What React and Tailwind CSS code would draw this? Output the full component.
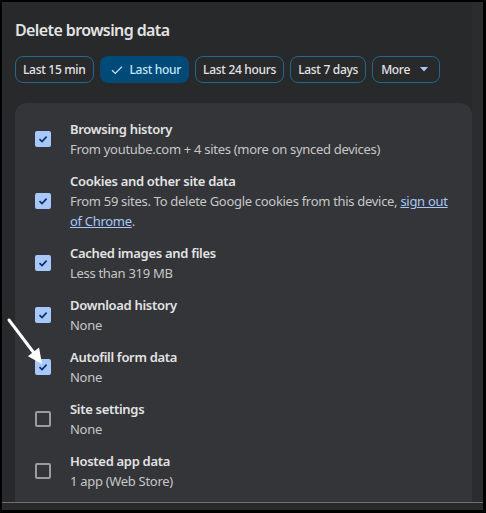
import React from "react";

const rows = [
  { title: "Browsing history", sub: "From youtube.com + 4 sites (more on synced devices)", checked: true },
  { title: "Cookies and other site data", sub: "cookies", checked: true },
  { title: "Cached images and files", sub: "Less than 319 MB", checked: true },
  { title: "Download history", sub: "None", checked: true },
  { title: "Autofill form data", sub: "None", checked: true },
  { title: "Site settings", sub: "None", checked: false },
  { title: "Hosted app data", sub: "1 app (Web Store)", checked: false },
];

const chips = ["Last 15 min", "Last hour", "Last 24 hours", "Last 7 days"];

const Checkbox = ({ checked }) =>
  checked ? (
    <div className="shrink-0 w-[16px] h-[16px] rounded-[2px] bg-[#a8c7fa] flex items-center justify-center">
      <svg width="12" height="12" viewBox="0 0 12 12">
        <path d="M2.5 6.2 L5 8.6 L9.6 3.6" fill="none" stroke="#062e6f" strokeWidth="1.6" />
      </svg>
    </div>
  ) : (
    <div className="shrink-0 w-[16px] h-[16px] rounded-[2px] border-2 border-[#9a9c9e]" />
  );

export default function App() {
  return (
    <div
      className="relative w-[486px] h-[513px] bg-black pt-[2px] pl-[2px] pr-[3px] pb-[3px]"
      style={{ fontFamily: '"Noto Sans", "Open Sans", sans-serif' }}
    >
      <div className="h-full bg-[#28292b] flex flex-col">
        <div className="flex-1 flex overflow-hidden">
          <div className="flex-1 pl-[13px] pt-[16px]">
            <h1 className="text-[16px] leading-[24px] font-semibold tracking-[-0.6px] text-[#e3e3e3]">
              Delete browsing data
            </h1>
            <div className="flex gap-[6px] mt-[14px] whitespace-nowrap tracking-[-0.3px]">
              {chips.map((c, i) =>
                i === 1 ? (
                  <div
                    key={c}
                    className="shrink-0 h-[27px] pl-[10px] pr-[8px] rounded-[8px] bg-[#004a77] text-[#c2e7ff] text-[12px] font-medium flex items-center gap-[6px]"
                  >
                    <svg width="14" height="14" viewBox="0 0 14 14">
                      <path d="M2 7.3 L5.3 10.4 L12 3.6" fill="none" stroke="#c2e7ff" strokeWidth="1.3" />
                    </svg>
                    {c}
                  </div>
                ) : (
                  <div
                    key={c}
                    className="shrink-0 h-[27px] px-[7px] rounded-[8px] border border-[#1d6a8c] text-[#e3e3e3] text-[12px] font-medium flex items-center"
                  >
                    {c}
                  </div>
                )
              )}
              <div className="shrink-0 h-[27px] pl-[8px] pr-[11px] rounded-[8px] border border-[#1d6a8c] text-[#e3e3e3] text-[12px] font-medium flex items-center gap-[10px]">
                More
                <svg width="8" height="5" viewBox="0 0 8 5">
                  <path d="M0 0 L8 0 L4 4.5 Z" fill="#a8c7fa" />
                </svg>
              </div>
            </div>
            <div className="mt-[20px] h-[500px] rounded-t-[12px] bg-[#333539] pt-[16px] pl-[20px] pr-[22px] flex flex-col gap-[12px] tracking-[-0.3px]">
              {rows.map((r) => (
                <div key={r.title} className="flex items-center">
                  <Checkbox checked={r.checked} />
                  <div className="ml-[19px] text-[13px] leading-[20px]">
                    <div className="font-semibold text-[#e3e3e3]">{r.title}</div>
                    {r.sub === "cookies" ? (
                      <div className="text-[#c7c7c7]">
                        From 59 sites. To delete Google cookies from this device,{" "}
                        <span className="text-[#a8c7fa] underline">sign out of Chrome</span>.
                      </div>
                    ) : (
                      <div className="text-[#c7c7c7]">{r.sub}</div>
                    )}
                  </div>
                </div>
              ))}
            </div>
          </div>
          <div className="w-[11px] bg-[#2b2c2d]" />
        </div>
        <div className="h-[8px] border-t border-[#6f6f6f] bg-[#29292a]" />
      </div>
      <svg className="absolute left-0 top-0" width="60" height="400" viewBox="0 0 60 400">
        <line x1="9" y1="320" x2="34" y2="353" stroke="white" strokeWidth="3" strokeLinecap="round" />
        <polygon points="42,364 27.9,356.2 39.05,347.6" fill="white" />
      </svg>
    </div>
  );
}
